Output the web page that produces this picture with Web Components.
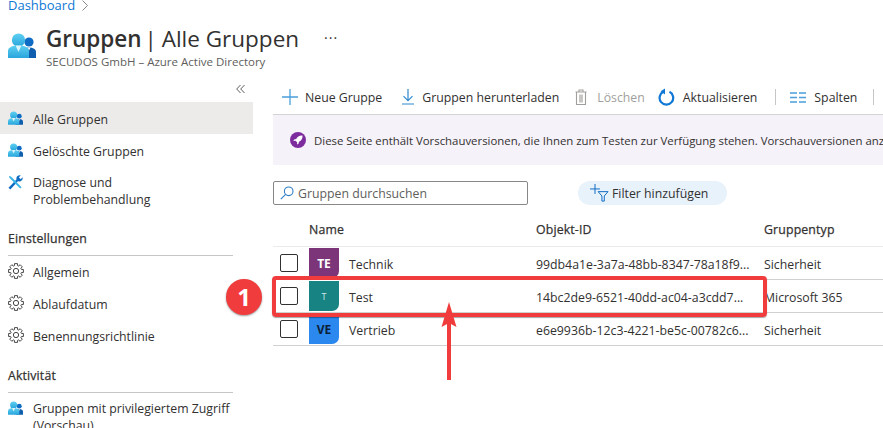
<!DOCTYPE html>
<html lang="de">
<head>
<meta charset="utf-8">
<title>Gruppen | Alle Gruppen</title>
<style>
    html, body {
        margin: 0;
        height: 428px;
        overflow: hidden;
        background: #fff;
        font-family: "Open Sans", "Noto Sans", sans-serif;
        color: #323130;
    }
    body {
        position: relative;
        width: 883px;
    }
    .layout {
        display: flex;
    }
</style>
</head>
<body>
<az-header></az-header>
<div class="layout">
    <az-sidebar></az-sidebar>
    <az-content></az-content>
</div>
<az-callout></az-callout>

<script>
// Shared icon set
const gearPath = (() => {
    // outline of an 8 tooth gear
    const pts = [];
    for (let i = 0; i < 8; i++) {
        const a = i * Math.PI / 4;
        [[-0.3, 5.9], [-0.2, 8], [0.2, 8], [0.3, 5.9]].forEach(([da, r]) => {
            pts.push((8 + r * Math.cos(a + da)).toFixed(2) + ' ' + (8 + r * Math.sin(a + da)).toFixed(2));
        });
    }
    return 'M' + pts.join('L') + 'Z';
})();

const groupIcon = (w, h) => `
    <svg width="${w}" height="${h}" viewBox="0 0 28 25">
        <defs>
            <linearGradient id="body" x1="0" y1="0" x2="0" y2="1">
                <stop offset="0" stop-color="#5ed0f2"/><stop offset="1" stop-color="#2aa5dc"/>
            </linearGradient>
        </defs>
        <circle cx="21" cy="9" r="4.6" fill="#0f6cc4"/>
        <path d="M14 25v-6c0-3 3-4.6 7-4.6s7 1.6 7 4.6v6z" fill="#0f5fae"/>
        <path d="M19.4 14.6l1.6 3 1.6-3z" fill="#fff"/>
        <circle cx="10.5" cy="7" r="6.6" fill="url(#body)"/>
        <path d="M0 25v-7c0-3.800 4-5.600 10.500-5.600S21 14.200 21 18v7z" fill="url(#body)"/>
        <path d="M7.600 12.500l2.900 6.500 2.900-6.500z" fill="#dff5fc"/>
    </svg>`;

const icons = {
    group: groupIcon(15, 14),
    tools: `<svg width="15" height="15" viewBox="0 0 16 16">
        <path d="M1.500 14.500L10.200 5.300" stroke="#0f6cc4" stroke-width="2.600" fill="none"/>
        <path d="M9 4.500a3.500 3.500 0 0 1 4.600-4l-2 2 1.900 1.900 2-2a3.500 3.500 0 0 1-4.500 4.300z" fill="#0f6cc4"/>
        <path d="M1 1l2 .5 2 2L14.500 13l-1.500 1.500L3.500 5l-2-2z" fill="#3ab5e6"/>
    </svg>`,
    gear: `<svg width="16" height="16" viewBox="-.5 -.5 17 17" fill="none" stroke="#3b3a39" stroke-width="1" stroke-linejoin="round">
        <path d="${gearPath}"/><circle cx="8" cy="8" r="2.800"/>
    </svg>`,
    plus: `<svg width="16" height="16" viewBox="0 0 16 16"><path d="M8 0v16M0 8h16" stroke="#4a9fdc" stroke-width="1.300"/></svg>`,
    download: `<svg width="14" height="16" viewBox="0 0 14 16" fill="none" stroke="#2f8ad0" stroke-width="1.200">
        <path d="M7 0v11.500M2.500 7.200L7 11.700l4.500-4.500M1 15h12"/></svg>`,
    trash: `<svg width="12" height="16" viewBox="0 0 12 16" fill="none" stroke="#a19f9d" stroke-width="1.100">
        <path d="M.5 3h11M4 3V1h4v2M1.500 3v12.500h9V3"/><path d="M4 5.500v8h4v-8z" fill="#c8c6c4" stroke="none"/></svg>`,
    refresh: `<svg width="17" height="18" viewBox="0 0 17 18" fill="none">
        <path d="M11.500 3.800a6.800 6.800 0 1 1-6.200 0" stroke="#0f78d4" stroke-width="2.200"/>
        <path d="M7 .2v6.200L2.600 3z" fill="#0f78d4" transform="translate(0 .2)"/></svg>`,
    columns: `<svg width="16" height="11" viewBox="0 0 16 11" stroke="#4a9fdc" stroke-width="1.300">
        <path d="M0 1h7M9 1h7M0 5.500h7M9 5.500h7M0 10h7M9 10h7"/></svg>`,
    search: `<svg width="14" height="14" viewBox="0 0 14 14" fill="none" stroke="#2f7fc4" stroke-width="1.100">
        <circle cx="8.700" cy="5.300" r="4.300"/><path d="M5.600 8.400L.8 13.200"/></svg>`,
    filter: `<svg width="19" height="18" viewBox="0 0 21 20" fill="none">
        <path d="M5.500 0v11M0 5.500h11" stroke="#0f6cc4" stroke-width="1.100"/>
        <path d="M9 8.500h11l-4.200 4.800v5.700h-2.600v-5.700z" stroke="#0f6cc4" stroke-width="1.100"/></svg>`,
    rocket: `<svg width="16" height="16" viewBox="0 0 16 16">
        <circle cx="8" cy="8" r="8" fill="#7d2c9e"/>
        <path d="M12.500 3.500c-3-.3-5 1-6.300 3.500l-2 .5-.8 1.500 2.200-.2 1.600 1.600-.2 2.200 1.500-.8.500-2c2.500-1.300 3.800-3.300 3.500-6.300z" fill="#fff"/></svg>`
};

function define(name, css, html) {
    customElements.define(name, class extends HTMLElement {
        constructor() {
            super();
            this.attachShadow({ mode: 'open' });
            this.shadowRoot.innerHTML = `<style>${css}</style>${typeof html === 'function' ? html(this) : html}`;
        }
    });
}

// Page title block
define('az-header', `
    :host { display: block; height: 74px; }
    .crumb { height: 14px; padding-left: 8px; line-height: 12px; font-size: 13px; color: #0f78d4; display: flex; align-items: center; gap: 7px; }
    .crumb span { position: relative; top: -2px; }
    .crumb svg { position: relative; top: -2px; }
    .head { display: flex; padding: 10px 0 0 8px; }
    .icon { width: 38px; padding-top: 9px; }
    h1 { margin: 0; font-size: 22.500px; line-height: 30px; font-weight: 400; color: #323130; white-space: nowrap; }
    h1 b { font-weight: 600; }
    h1 i { font-style: normal; margin: 0 -1px 0 -3px; }
    .sub { font-size: 11.500px; line-height: 14px; color: #605e5c; margin-top: 1px; }
    .more { margin: 7px 0 0 25px; font-size: 14px; line-height: 14px; letter-spacing: 1px; color: #323130; }
`, `
    <div class="crumb"><span>Dashboard</span>
        <svg width="6" height="11" viewBox="0 0 6 11" fill="none" stroke="#8a8886"><path d="M.5.500l5 5-5 5"/></svg>
    </div>
    <div class="head">
        <div class="icon">${groupIcon(28, 25)}</div>
        <div>
            <h1><b>Gruppen</b> <i>|</i> Alle Gruppen</h1>
            <div class="sub">SECUDOS GmbH – Azure Active Directory</div>
        </div>
        <div class="more">···</div>
    </div>
`);

// One entry of the side menu
define('az-nav-item', `
    :host { display: flex; box-sizing: border-box; min-height: 32px; align-items: center; font-size: 12.300px; line-height: 17px; color: #323130; }
    :host([selected]) { background: #edebe9; }
    .icon { width: 25px; padding-left: 8px; flex: none; display: flex; }
    .text { padding-top: 2px; }
    :host([wrap]) { align-items: flex-start; padding-top: 8px; }
    :host([wrap]) .icon { padding-top: 1px; }
    :host([wrap]) .text { padding-top: 0; }
`, el => `<div class="icon">${icons[el.getAttribute('icon')]}</div><div class="text"><slot></slot></div>`);

define('az-nav-title', `
    :host { display: block; margin: 0 20px 0 8px; padding: 0 0 7px; border-bottom: 1px solid #c8c6c4; font-size: 12.300px; line-height: 18px; letter-spacing: .15px; -webkit-text-stroke: .25px #323130; color: #323130; }
`, `<slot></slot>`);

define('az-sidebar', `
    :host { display: block; width: 253px; flex: none; }
    .collapse { height: 28px; display: flex; justify-content: flex-end; padding: 11px 8px 0 0; box-sizing: border-box; }
    .set1 { margin-top: 22px; }
    .set2 { margin-top: 16px; }
    .items { margin-top: -1px; }
    .last { margin-top: -1px; }
`, `
    <div class="collapse"><svg width="9" height="8" viewBox="0 0 9 8" fill="none" stroke="#605e5c"><path d="M4.500 0L.7 4l3.800 4M8.500 0L4.700 4l3.800 4"/></svg></div>
    <az-nav-item icon="group" selected>Alle Gruppen</az-nav-item>
    <az-nav-item icon="group">Gelöschte Gruppen</az-nav-item>
    <az-nav-item icon="tools" wrap>Diagnose und<br>Problembehandlung</az-nav-item>
    <az-nav-title class="set1">Einstellungen</az-nav-title>
    <div class="items">
        <az-nav-item icon="gear">Allgemein</az-nav-item>
        <az-nav-item icon="gear">Ablaufdatum</az-nav-item>
        <az-nav-item icon="gear">Benennungsrichtlinie</az-nav-item>
    </div>
    <az-nav-title class="set2">Aktivität</az-nav-title>
    <az-nav-item class="last" icon="group" wrap>Gruppen mit privilegiertem Zugriff<br>(Vorschau)</az-nav-item>
`);

// Toolbar button
define('az-tool', `
    :host { display: flex; align-items: center; gap: var(--gap, 7px); font-size: 12.300px; color: #323130; white-space: nowrap; }
    :host([disabled]) { color: #a19f9d; }
    .icon { display: flex; }
`, el => `<div class="icon">${icons[el.getAttribute('icon')]}</div><slot></slot>`);

define('az-toolbar', `
    :host { display: flex; align-items: center; box-sizing: border-box; height: 41px; padding: 6px 0 0 9px; border-bottom: 1px solid #d5d3d1; white-space: nowrap; overflow: hidden; }
    .sep { width: 1px; height: 16px; background: #c8c6c4; flex: none; }
`, `
    <az-tool icon="plus">Neue Gruppe</az-tool>
    <az-tool icon="download" style="margin-left:19px">Gruppen herunterladen</az-tool>
    <az-tool icon="trash" style="margin-left:16px;--gap:10px" disabled>Löschen</az-tool>
    <az-tool icon="refresh" style="margin-left:13px;--gap:8px">Aktualisieren</az-tool>
    <div class="sep" style="margin-left:18px"></div>
    <az-tool icon="columns" style="margin-left:14px;--gap:8px">Spalten</az-tool>
    <div class="sep" style="margin-left:16px"></div>
`);

define('az-banner', `
    :host { display: flex; align-items: center; gap: 8px; height: 50px; background: #f6f2fa; padding-left: 17px; font-size: 11.400px; color: #323130; white-space: nowrap; overflow: hidden; }
    svg { flex: none; }
`, `${icons.rocket}<slot></slot>`);

define('az-filters', `
    :host { display: flex; gap: 50px; margin-top: 16px; height: 24px; }
    .search { width: 255px; box-sizing: border-box; border: 1px solid #8a8886; border-radius: 2px; display: flex; align-items: center; gap: 4px; padding-left: 6px; font-size: 12.300px; color: #605e5c; }
    .pill { width: 149px; box-sizing: border-box; background: #e8f2fb; border-radius: 12px; display: flex; align-items: center; gap: 3px; padding-left: 12px; font-size: 12.300px; color: #323130; }
`, `
    <div class="search">${icons.search}<span>Gruppen durchsuchen</span></div>
    <div class="pill">${icons.filter}<span>Filter hinzufügen</span></div>
`);

// Table row: checkbox, avatar, name, object id, type
define('az-row', `
    :host { display: grid; grid-template-columns: 36px 227px 228px 1fr; height: 33px; border-bottom: 1px solid #d2d0ce; font-size: 12.300px; color: #323130; white-space: nowrap; box-sizing: border-box; align-items: center; }
    .check { width: 16px; height: 16px; border: 1px solid #323130; border-radius: 2px; margin-left: 7px; }
    .name { display: flex; align-items: center; gap: 10px; }
    .label { padding-top: 2px; }
    .avatar { width: 30px; height: 30px; border-radius: 0 0 7px 0; display: flex; align-items: center; justify-content: center; font-weight: 700; font-size: 12px; color: var(--fg); background: var(--bg); }
    :host([small]) .avatar { font-weight: 400; font-size: 9px; }
`, el => `
    <div class="check"></div>
    <div class="name"><div class="avatar">${el.getAttribute('short')}</div><span class="label">${el.getAttribute('name')}</span></div>
    <div class="label">${el.getAttribute('oid')}</div>
    <div class="label">${el.getAttribute('type')}</div>
`);

define('az-table', `
    :host { display: block; margin-top: 15px; }
    .head { display: grid; grid-template-columns: 36px 227px 228px 1fr; height: 18px; padding: 1px 0 7px; border-bottom: 1px solid #edebe9; font-size: 12.300px; line-height: 18px; letter-spacing: .15px; -webkit-text-stroke: .25px #323130; color: #323130; }
`, `
    <div class="head"><span></span><span>Name</span><span>Objekt-ID</span><span>Gruppentyp</span></div>
    <az-row short="TE" name="Technik" oid="99db4a1e-3a7a-48bb-8347-78a18f9..." type="Sicherheit" style="--bg:#7b3578;--fg:#fff"></az-row>
    <az-row short="T" name="Test" oid="14bc2de9-6521-40dd-ac04-a3cdd7..." type="Microsoft 365" small style="--bg:#178383;--fg:#cfe8e8"></az-row>
    <az-row short="VE" name="Vertrieb" oid="e6e9936b-12c3-4221-be5c-00782c6..." type="Sicherheit" style="--bg:#2b88ee;--fg:#0b1f38"></az-row>
`);

define('az-content', `
    :host { display: block; margin-left: 20px; width: 610px; overflow: hidden; }
`, `
    <az-toolbar></az-toolbar>
    <az-banner>Diese Seite enthält Vorschauversionen, die Ihnen zum Testen zur Verfügung stehen. Vorschauversionen anzeigen</az-banner>
    <az-filters></az-filters>
    <az-table></az-table>
`);

// Red screenshot markup lying over the table
define('az-callout', `
    :host { display: block; position: absolute; inset: 0; pointer-events: none; }
    .box { position: absolute; left: 272px; top: 276px; width: 495px; height: 41px; box-sizing: border-box; border: 4px solid #f03c3c; border-radius: 4px; box-shadow: 0 1px 1px rgba(0,0,0,.35); }
    .badge { position: absolute; left: 226px; top: 279px; width: 36px; height: 36px; border-radius: 50%; background: #f03c3c; box-shadow: 0 1px 2px rgba(0,0,0,.4); color: #fff; font: 700 24px/36px "Open Sans", sans-serif; text-align: center; }
    svg { position: absolute; left: 441px; top: 302px; }
`, `
    <div class="box"></div>
    <div class="badge">1</div>
    <svg width="16" height="78" viewBox="0 0 16 78"><path d="M8 0l7.500 25-7.500-4-7.500 4z" fill="#f03c3c"/><path d="M8 20v58" stroke="#f03c3c" stroke-width="4"/></svg>
`);
</script>
</body>
</html>
